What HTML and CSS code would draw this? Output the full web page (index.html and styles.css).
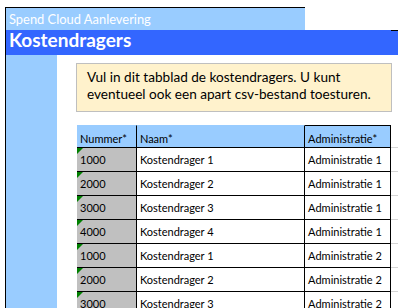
FILE: index.html
```html
<!DOCTYPE html>
<html lang="nl">
<head>
<meta charset="utf-8">
<title>Kostendragers</title>
<link rel="stylesheet" href="styles.css">
</head>
<body>
<div class="sheet">
  <div class="band-top"><span class="subtitle">Spend Cloud Aanlevering</span></div>
  <div class="band-title"><span>Kostendragers</span></div>
  <div class="body">
    <div class="side"></div>
    <div class="content">
      <div class="note">Vul in dit tabblad de kostendragers. U kunt<br>eventueel ook een apart csv-bestand toesturen.</div>
      <table class="grid">
        <thead>
          <tr>
            <th class="c-num">Nummer*</th>
            <th class="c-name">Naam*</th>
            <th class="c-adm">Administratie*</th>
            <th class="c-fill"></th>
          </tr>
        </thead>
        <tbody>
          <tr><td class="c-num">1000</td><td class="c-name">Kostendrager 1</td><td class="c-adm">Administratie 1</td><td class="c-fill"></td></tr>
          <tr><td class="c-num">2000</td><td class="c-name">Kostendrager 2</td><td class="c-adm">Administratie 1</td><td class="c-fill"></td></tr>
          <tr><td class="c-num">3000</td><td class="c-name">Kostendrager 3</td><td class="c-adm">Administratie 1</td><td class="c-fill"></td></tr>
          <tr><td class="c-num">4000</td><td class="c-name">Kostendrager 4</td><td class="c-adm">Administratie 1</td><td class="c-fill"></td></tr>
          <tr><td class="c-num">1000</td><td class="c-name">Kostendrager 1</td><td class="c-adm">Administratie 2</td><td class="c-fill"></td></tr>
          <tr><td class="c-num">2000</td><td class="c-name">Kostendrager 2</td><td class="c-adm">Administratie 2</td><td class="c-fill"></td></tr>
          <tr><td class="c-num">3000</td><td class="c-name">Kostendrager 3</td><td class="c-adm">Administratie 2</td><td class="c-fill"></td></tr>
        </tbody>
      </table>
    </div>
  </div>
</div>
</body>
</html>
```
FILE: styles.css
```css
html, body {
  margin: 0;
  padding: 0;
  background: #ffffff;
  overflow: hidden;
}

body {
  font-family: Lato, "Liberation Sans", sans-serif;
  color: #000000;
  width: 398px;
  height: 308px;
}

.sheet {
  margin: 7px 0 0 5px;
  border-left: 1px solid #000000;
  height: 301px;
}

.band-top {
  box-sizing: border-box;
  width: 299px;
  height: 23px;
  border-top: 1px solid #000000;
  background: #99ccff;
  padding-left: 3px;
  display: flex;
  align-items: center;
}

.subtitle {
  color: #ffffff;
  font-size: 12.9px;
  line-height: 1;
}

.band-title {
  position: relative;
  box-sizing: border-box;
  height: 25px;
  background: #3366ff;
  color: #ffffff;
  font-weight: 700;
  font-size: 19px;
  line-height: 19px;
  padding-left: 3px;
}

.band-title::after {
  content: "";
  position: absolute;
  right: 0;
  top: 0;
  width: 7px;
  height: 1px;
  background: #000000;
}

.body {
  display: flex;
  height: 253px;
}

.side {
  width: 51px;
  flex: none;
  background: #99ccff;
}

.content {
  padding: 8px 0 0 20px;
}

.note {
  box-sizing: border-box;
  margin-left: -1px;
  width: 316px;
  height: 49px;
  border: 1px solid #bfbfbf;
  background: #fff2cc;
  padding: 5px 0 0 10px;
  font-size: 13.6px;
  line-height: 17px;
}

.grid {
  margin-top: 13px;
  border-collapse: separate;
  border-spacing: 0;
  table-layout: fixed;
  font-size: 11px;
}

.grid th,
.grid td {
  box-sizing: border-box;
  padding: 0 0 4px 3px;
  text-align: left;
  vertical-align: bottom;
  font-weight: 400;
  white-space: nowrap;
  line-height: 14px;
  border-bottom: 1px solid #000000;
}

.grid th {
  height: 23px;
  padding-bottom: 1px;
  background: #99ccff;
  border-top: 1px solid transparent;
}

.grid td {
  height: 24px;
}

.c-num {
  width: 60px;
  border-right: 1px solid #000000;
}

.c-name {
  width: 169px;
  border-right: 1px solid #000000;
}

.c-adm {
  width: 86px;
  border-right: 1px solid #000000;
}

.grid th.c-adm {
  border-top: 1px solid #000000;
}

.grid .c-fill {
  width: 7px;
  border-right: 0;
  border-bottom-color: #d4d4d4;
  background: #ffffff;
}

.grid td.c-num {
  position: relative;
  background: #c0c0c0;
}

.grid td.c-num::before {
  content: "";
  position: absolute;
  left: 0;
  top: 0;
  border-top: 6px solid #008000;
  border-right: 6px solid transparent;
}
```
